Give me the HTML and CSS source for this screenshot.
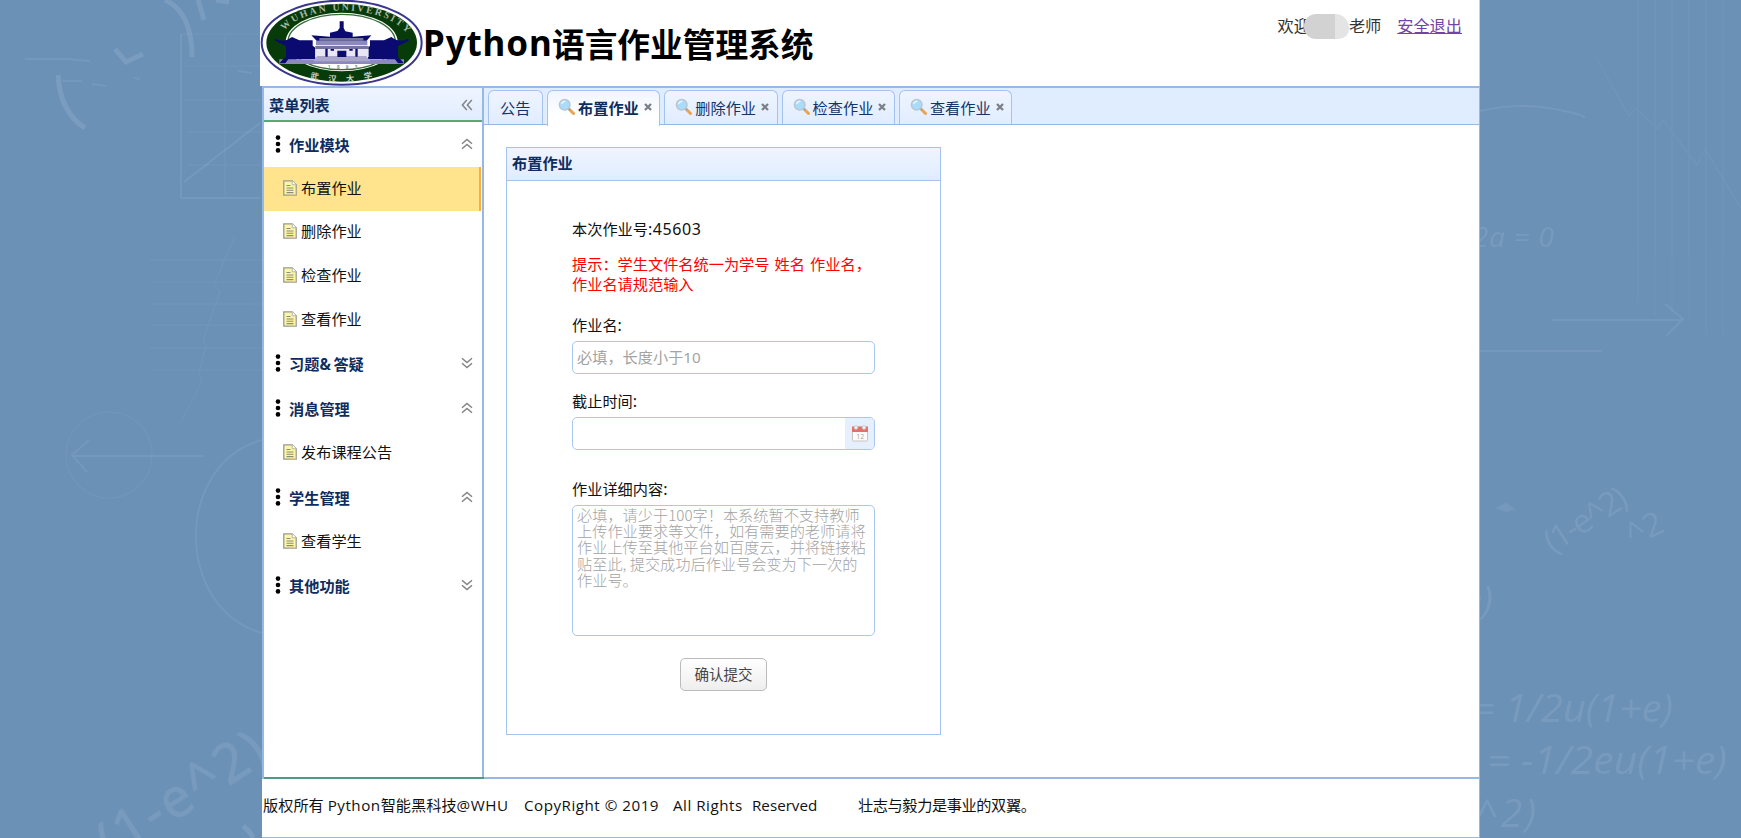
FILE: index.html
```html
<!DOCTYPE html>
<html lang="zh-CN">
<head>
<meta charset="utf-8">
<title>Python语言作业管理系统</title>
<link rel="stylesheet" href="styles.css">
</head>
<body>
<svg class="sprites" width="0" height="0" aria-hidden="true">
  <symbol id="i-doc" viewBox="0 0 14 16">
    <path d="M.8.8h8.400l4 4v10.400H.8z" fill="#fbf7a4" stroke="#989a94" stroke-width="1.300"/>
    <path d="M9.200.8v4h4" fill="#fff" stroke="#b5b5a0"/>
    <path d="M3.500 5.500h4M3.500 8h7M3.500 10.300h7M3.500 12.600h7" stroke="#8d8d72" stroke-width="1.100"/>
    <path d="M12.600 8v6.600H6" fill="none" stroke="#eac98c"/>
  </symbol>
  <symbol id="i-dots" viewBox="0 0 6 18">
    <circle cx="3" cy="2.600" r="2.300"/><circle cx="3" cy="9" r="2.300"/><circle cx="3" cy="15.400" r="2.300"/>
  </symbol>
  <symbol id="i-up" viewBox="0 0 12 12">
    <path d="M1 5.800 6 1.400l5 4.400M1 10.800 6 6.400l5 4.400" fill="none" stroke="#858585" stroke-width="1.500"/>
  </symbol>
  <symbol id="i-down" viewBox="0 0 12 12">
    <path d="M1 1.200 6 5.600l5-4.400M1 6.200l5 4.400 5-4.400" fill="none" stroke="#858585" stroke-width="1.500"/>
  </symbol>
  <symbol id="i-search" viewBox="0 0 18 18">
    <path d="m11.500 11.500 4 4" stroke="#eda24c" stroke-width="3" stroke-linecap="round"/>
    <path d="m10 10 2 2" stroke="#9aa3ad" stroke-width="2"/>
    <circle cx="6.700" cy="6.700" r="5.300" fill="#a9dcfb" stroke="#bcc5d0" stroke-width="1.500"/>
    <path d="M3.500 6.200a3.300 3.300 0 0 1 4-2.700" fill="none" stroke="#dff4ff" stroke-width="1.600"/>
  </symbol>
  <symbol id="i-close" viewBox="0 0 8 8">
    <path d="m1 1 6 6M7 1 1 7" stroke="#7b8088" stroke-width="2.300"/>
  </symbol>
</svg>

<svg class="backdrop" viewBox="0 0 1741 838" aria-hidden="true">
  <g class="bold">
    <path d="M165 0Q192 12 192 57M58 75q2 37 27 53M198 0l6 20M216 0l13 2M115 49l11 13 17-8M243 826q7 5 10 12"/>
  </g>
  <g class="soft">
    <path d="M25 59h42l23 2M62 81h20M92 84l14 2M134 78l6 1M238 71l14 2M181 34v164M260 198h-79"/>
    <path d="m184 182 76-59M203 456H72M89 440l-17 15 15 17M262 440c-88 24-88 168 0 193"/>
    <path d="M1480 111q40-9 75-2t28 9M1551 320h132M1665 304l18 15-17 17M1480 351h122"/>
    <path class="blot" d="M1498 508l8-4 7 5-7 2z"/>
  </g>
  <g class="faint">
    <path d="M181 34h79M225 34v164M185 66h75M185 100h75M188 132h72M188 165h72"/>
    <path d="M150 260h112M150 282h112M150 304h112M150 325h112M150 348h112M150 370h112"/>
    <path d="m235 237-21 47 6 8-17 48 3 5-7 28 3 8-21 41"/>
    <circle cx="109" cy="455" r="43"/>
    <path d="M1638 0v303M1655 0v316M1672 0v316M1689 0v322M1706 0v335M1723 0v335"/>
    <path d="m1596 57 33 59 7-8 22 21 5-9 34 45 8-16 36 59"/>
  </g>
  <g class="formula">
    <text class="large" transform="translate(112 862) rotate(-33)" font-size="54" textLength="188">(1-e^2)</text>
    <text transform="translate(1553 554) rotate(-33)" font-size="33" textLength="92">(1-e^2)</text>
    <text transform="translate(1632 547) rotate(-25)" font-size="33">^2</text>
    <g font-style="italic">
      <text x="1473" y="247" font-size="28" textLength="81">2a = 0</text>
      <text x="1463" y="614" font-size="38">e)</text>
      <text x="1472" y="722" font-size="39" textLength="201" lengthAdjust="spacingAndGlyphs">= 1/2u(1+e)</text>
      <text x="1487" y="774" font-size="39" textLength="240" lengthAdjust="spacingAndGlyphs">= -1/2eu(1+e)</text>
      <text x="1476" y="827" font-size="39" textLength="60">^2)</text>
    </g>
  </g>
</svg>

<div class="page">
  <header class="header">
    <svg class="logo" viewBox="12 0 492 258" aria-label="Wuhan University">
      <defs>
        <path id="arc-top" d="M86 92C142 15 370 5 452 98"/>
        <path id="arc-bottom" d="M150 232Q260 262 372 228"/>
      </defs>
      <ellipse cx="257" cy="128" rx="240" ry="126" fill="#fff" stroke="#39368c" stroke-width="6"/>
      <ellipse cx="257" cy="128" rx="226" ry="117" fill="#073b0a"/>
      <ellipse cx="257" cy="126" rx="168" ry="88" fill="#fff"/>
      <ellipse cx="257" cy="126" rx="161" ry="83" fill="#fff" stroke="#396b3a" stroke-width="4"/>
      <text class="seal-en"><textPath href="#arc-top" textLength="400">WUHAN UNIVERSITY</textPath></text>
      <text class="seal-zh"><textPath href="#arc-bottom" startOffset="12" textLength="190">武汉大学</textPath></text>
      <path fill="#8c8abb" d="M70 178h374v14H70zM180 122h154v14H180z"/>
      <path fill="#0a0a70" d="M251 64h12v20l5 10 22 4v12l56-4-14 16H182l-16-16 56 4V98l22-5 7-9zM58 116q26 14 50-5l22 10h40v16l8 6v34H82l8-6v-33l-32-16zM456 116q-26 14-50-5l-22 10h-42v16l-6 6v34h94l-4-6v-33l32-16zM82 176l-12 14h18l10-14zM432 176l12 14h-18l-10-14z"/>
      <path fill="#77749f" d="M190 114h132v8H190zM178 138h160v9H178z"/>
      <path fill="#e7e6f2" d="M178 147h160v24H178z"/>
      <path fill="#aaa7cb" d="M184 168h146l14 16H172z"/>
      <path fill="#0a0a70" d="M208 146h7v24h-7zM244 152h27v19h-27zM298 146h7v24h-7zM224 147h10v5h-10zM280 147h10v5h-10z"/>
      <text x="216" y="207" class="seal-year" textLength="88">1893</text>
    </svg>
    <h1 class="title"><span class="title-latin">Python</span><span class="title-cjk">语言作业管理系统</span></h1>
    <div class="user">
      <span>欢迎</span><span class="mask"></span><span>老师</span>
      <a class="logout" href="#">安全退出</a>
    </div>
  </header>

  <div class="body">
    <aside class="sidebar">
      <div class="sidebar-head">菜单列表
        <svg class="collapse" viewBox="0 0 12 12"><path d="M5.800 1 1.400 6l4.400 5M10.800 1 6.400 6l4.400 5" fill="none" stroke="#858585" stroke-width="1.500"/></svg>
      </div>
      <nav class="menu">
        <div class="group"><svg class="dots"><use href="#i-dots"/></svg>作业模块<svg class="arrow"><use href="#i-up"/></svg></div>
        <div class="item selected"><svg class="doc"><use href="#i-doc"/></svg>布置作业</div>
        <div class="item"><svg class="doc"><use href="#i-doc"/></svg>删除作业</div>
        <div class="item"><svg class="doc"><use href="#i-doc"/></svg>检查作业</div>
        <div class="item"><svg class="doc"><use href="#i-doc"/></svg>查看作业</div>
        <div class="group"><svg class="dots"><use href="#i-dots"/></svg><span>习题<span class="amp">&amp;</span>答疑</span><svg class="arrow"><use href="#i-down"/></svg></div>
        <div class="group"><svg class="dots"><use href="#i-dots"/></svg>消息管理<svg class="arrow"><use href="#i-up"/></svg></div>
        <div class="item"><svg class="doc"><use href="#i-doc"/></svg>发布课程公告</div>
        <div class="group"><svg class="dots"><use href="#i-dots"/></svg>学生管理<svg class="arrow"><use href="#i-up"/></svg></div>
        <div class="item"><svg class="doc"><use href="#i-doc"/></svg>查看学生</div>
        <div class="group"><svg class="dots"><use href="#i-dots"/></svg>其他功能<svg class="arrow"><use href="#i-down"/></svg></div>
      </nav>
    </aside>

    <main class="main">
      <div class="tabs">
        <div class="tab plain">公告</div>
        <div class="tab active"><svg class="glass"><use href="#i-search"/></svg>布置作业<svg class="close"><use href="#i-close"/></svg></div>
        <div class="tab"><svg class="glass"><use href="#i-search"/></svg>删除作业<svg class="close"><use href="#i-close"/></svg></div>
        <div class="tab"><svg class="glass"><use href="#i-search"/></svg>检查作业<svg class="close"><use href="#i-close"/></svg></div>
        <div class="tab"><svg class="glass"><use href="#i-search"/></svg>查看作业<svg class="close"><use href="#i-close"/></svg></div>
      </div>
      <section class="panel">
        <h2 class="panel-head">布置作业</h2>
        <form class="form">
          <p class="number">本次作业号<span class="digits">:45603</span></p>
          <p class="hint">提示：学生文件名统一为学号 姓名 作业名，<br>作业名请规范输入</p>
          <label class="label">作业名<span class="digits">:</span></label>
          <input class="field" type="text" placeholder="必填，长度小于10">
          <label class="label deadline">截止时间<span class="digits">:</span></label>
          <div class="field date">
            <span class="date-button">
              <svg class="calendar" viewBox="0 0 18 18">
                <rect x="1.500" y="3" width="15" height="14" rx="1" fill="#fdfbfa" stroke="#c9c4c0"/>
                <path d="M1 2.500h16V8H1z" fill="#e2716d"/>
                <circle cx="5" cy="3.500" r="1.900" fill="#eee" stroke="#b9b9b9" stroke-width=".6"/>
                <circle cx="13" cy="3.500" r="1.900" fill="#eee" stroke="#b9b9b9" stroke-width=".6"/>
                <text x="5.200" y="14.500" class="calendar-day">12</text>
              </svg>
            </span>
          </div>
          <label class="label details">作业详细内容<span class="digits">:</span></label>
          <textarea class="field area" placeholder="必填，请少于100字！本系统暂不支持教师&#10;上传作业要求等文件，如有需要的老师请将&#10;作业上传至其他平台如百度云，并将链接粘&#10;贴至此, 提交成功后作业号会变为下一次的&#10;作业号。"></textarea>
          <button class="submit" type="button">确认提交</button>
        </form>
      </section>
    </main>
  </div>

  <footer class="footer">
    <span class="f-owner">版权所有 <span class="wide">Python</span>智能黑科技<span class="wide">@WHU</span></span>
    <span class="f-copy wide">CopyRight © 2019</span>
    <span class="f-all wide">All Rights</span>
    <span class="f-res">Reserved</span>
    <span class="f-motto">壮志与毅力是事业的双翼。</span>
  </footer>
</div>
</body>
</html>
```
FILE: styles.css
```css
* { box-sizing: border-box; }
body {
  margin: 0;
  height: 838px;
  overflow: hidden;
  background: #6b91b7;
  color: #111;
  font: 15.2px/20px "Noto Sans", "Noto Sans CJK SC", sans-serif;
}
.sprites { position: absolute; }
.backdrop { position: absolute; left: 0; top: 0; width: 1741px; height: 838px; }
.backdrop path, .backdrop circle { fill: none; stroke: #fff; stroke-width: 1.5; }
.backdrop .bold { opacity: .1; }
.backdrop .bold path { stroke-width: 5; }
.backdrop .soft { opacity: .07; }
.backdrop .soft path { stroke-width: 2; }
.backdrop .soft .blot { fill: #fff; }
.backdrop .faint { opacity: .035; }
.formula { opacity: .09; fill: #fff; font-family: "Open Sans", "Noto Sans", sans-serif; }
.large { stroke: #fff; stroke-width: 1; }

.page {
  position: relative;
  width: 1220px;
  height: 838px;
  margin-left: 260px;
  display: flex;
  flex-direction: column;
}
.header {
  height: 86px;
  background: #fff;
  border-right: 1px solid #c5d3e2;
  display: flex;
  align-items: flex-start;
}
.logo { width: 164px; height: 86px; flex: none; }
.seal-en { font: bold 29px "Liberation Serif", serif; fill: #aab9a6; }
.seal-zh { font: bold 25px "Noto Sans CJK SC", sans-serif; fill: #c9d4c8; }
.seal-year { font: bold 14px "Liberation Sans", sans-serif; fill: #6b8f6b; }
.title {
  margin: 19px 0 0 -1px;
  display: flex;
  line-height: 48px;
  color: #000;
  font-weight: 700;
  white-space: nowrap;
}
.title-latin { width: 129px; font-size: 35px; letter-spacing: .9px; font-family: "Noto Sans", sans-serif; }
.title-cjk { font-size: 32.7px; font-family: "Noto Sans CJK SC", sans-serif; }
.user {
  margin: 16px 17px 0 auto;
  display: flex;
  font-size: 16.2px;
  color: #333;
}
.mask {
  position: relative;
  width: 45px;
  height: 25px;
  margin: -2px 0 0 -6px;
  border-radius: 12px 14px 10px 12px;
  background: linear-gradient(90deg, #d2d2d2 68%, #e4e4e4 68%);
}
.logout { margin-left: 16px; color: #7244a6; }

.body {
  margin-left: 2px;
  height: 693px;
  display: flex;
  border: 2px solid #95b8e7;
  border-right-width: 1px;
  background: #fff;
}
.sidebar {
  width: 220px;
  flex: none;
  border-right: 2px solid #95b8e7;
  display: flex;
  flex-direction: column;
  box-shadow: 0 2px 0 #4d9a86;
}
.sidebar-head {
  height: 34px;
  padding: 2px 8px 1px 5px;
  border-bottom: 2px solid #5aa974;
  background: linear-gradient(#eff5ff, #e0ecff);
  display: flex;
  align-items: center;
  justify-content: space-between;
  color: #0e2d5f;
  font-weight: 700;
}
.collapse { width: 12px; height: 12px; margin-right: 1px; }
.group {
  height: 45.1px;
  display: flex;
  align-items: center;
  padding: 0 8px 0 11px;
  color: #0e2d5f;
  font-weight: 700;
}
.amp { display: inline-block; width: 14px; }
.dots { width: 6px; height: 18px; margin: 0 8px 2px 0; }
.arrow { width: 12px; height: 12px; margin: 0 1px 2px auto; }
.item {
  height: 43.6px;
  display: flex;
  align-items: center;
  padding: 0 0 2px 19px;
  margin-right: 1px;
}
.selected { background: #ffe48d; border-right: 2px solid #fbac42; }
.doc { width: 14px; height: 16px; margin-right: 4px; }

.main { flex: 1; }
.tabs {
  height: 37px;
  padding: 2px 0 0 4px;
  display: flex;
  gap: 4px;
  border-bottom: 1px solid #95b8e7;
  background: #e0ecff;
}
.tab {
  width: 113.3px;
  height: 34px;
  padding: 0 0 0 10px;
  display: flex;
  align-items: center;
  border: 1px solid #a4c4ef;
  border-bottom: 0;
  border-radius: 6px 6px 0 0;
  background: linear-gradient(#eff5ff, #e0ecff);
  color: #123468;
}
.plain { width: 55px; padding-left: 11px; }
.active { height: 36px; padding-bottom: 2px; background: linear-gradient(#eff5ff, #fff 70%); font-weight: 700; color: #0e2d5f; }
.glass { width: 18px; height: 18px; margin: -1px 2px 0 0; }
.close { width: 8px; height: 8px; margin: -2px 0 0 5px; }

.panel {
  width: 435px;
  height: 588px;
  margin: 22px 0 0 22px;
  border: 1px solid #a4c4ef;
  display: flex;
  flex-direction: column;
}
.panel-head {
  margin: 0;
  height: 33px;
  padding: 0 5px;
  border-bottom: 1px solid #a4c4ef;
  background: linear-gradient(#eff5ff, #e0ecff);
  font-size: 15.2px;
  line-height: 31px;
  color: #0e2d5f;
}
.form {
  padding: 38px 65px 0;
  display: flex;
  flex-direction: column;
}
.form p { margin: 0; white-space: nowrap; }
.digits { font-size: 16px; letter-spacing: .6px; line-height: 1; }
.form .hint { margin-top: 15px; color: #f00; line-height: 20.4px; word-spacing: 1.2px; }
.label { margin-top: 20px; height: 20px; }
.field {
  width: 303px;
  height: 33px;
  margin: 6px 0 0;
  padding: 0 4px 1px;
  border: 1px solid #a9c7f0;
  border-radius: 5px;
  background: #fff;
  outline: 0;
  font: inherit;
}
.field::placeholder { color: #a3a3a3; opacity: 1; }
.deadline { margin-top: 17px; }
.date { padding: 0; display: flex; justify-content: flex-end; overflow: hidden; }
.date-button { width: 29px; background: #e6effd; display: flex; align-items: center; justify-content: center; }
.calendar { width: 18px; height: 18px; }
.calendar-day { font: 7px "Noto Sans", sans-serif; fill: #aaa; }
.details { margin-top: 29px; }
.area {
  height: 131px;
  margin-top: 6px;
  padding: 0 0 0 4px;
  resize: none;
  overflow: hidden;
  white-space: pre;
  font: 300 15.2px/16.3px "Noto Sans CJK SC", sans-serif;
}
.submit {
  width: 87px;
  height: 33px;
  margin: 22px auto 0;
  padding: 0 0 1px;
  border: 1px solid #bbb;
  border-radius: 5px;
  background: linear-gradient(#fff, #eee);
  color: #444;
  font: 14.5px "Noto Sans CJK SC", sans-serif;
}
.footer {
  flex: 1;
  margin-left: 2px;
  padding: 16px 0 0 1px;
  background: #fff;
  border-right: 1px solid #95b8e7;
  border-bottom: 1px solid #95b8e7;
  display: flex;
  white-space: nowrap;
  font-family: "Open Sans", "Noto Sans CJK SC", sans-serif;
}
.wide { letter-spacing: .5px; }
.f-owner { width: 261px; }
.f-copy { width: 149px; }
.f-all { width: 79px; }
.f-res { width: 106px; }
.f-motto { letter-spacing: -.4px; }
```
